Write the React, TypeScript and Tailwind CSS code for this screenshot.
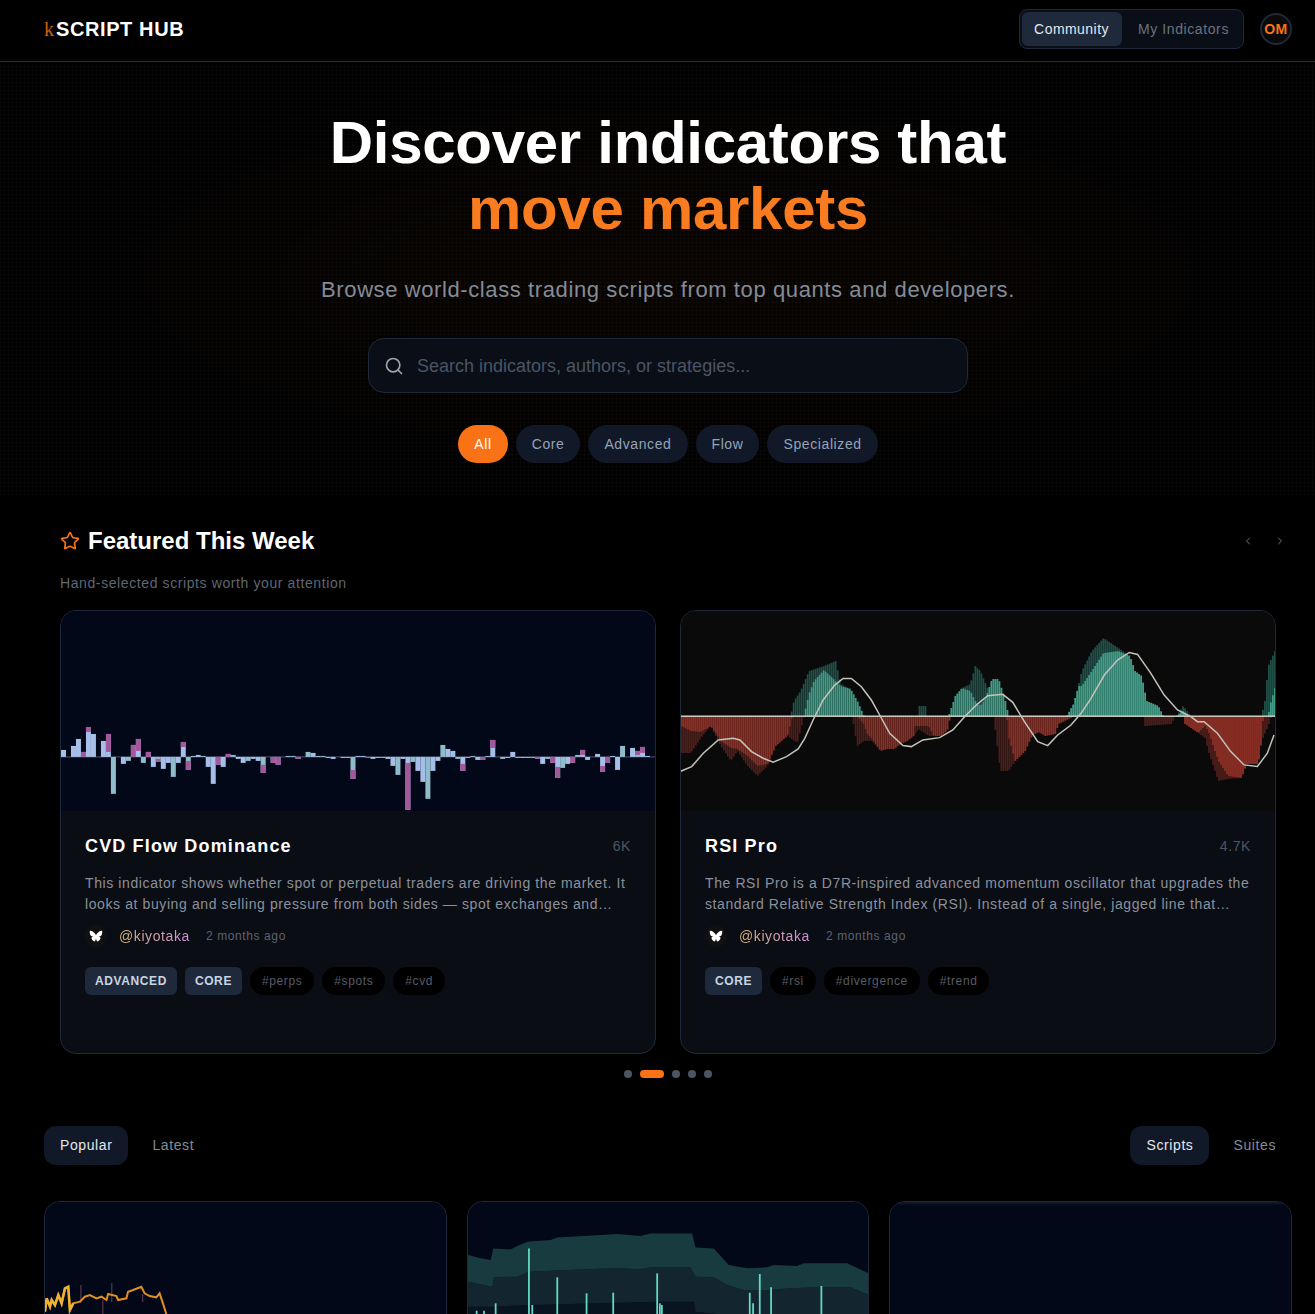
import { ChevronLeft, ChevronRight, Search, Star } from "lucide-react";

type Pt = [number, number];

// CVD bars, left to right: [value, purple part at the tip]
const CVD_BARS: Pt[] = [
  [7, 0], [0, 0], [11, 0], [18, 0], [5, 5], [30, 5], [23, 0], [0, 0], [16, 0], [23, 18], [-37, 0], [0, 0], [-7, 0], [-4, 0], [12, 12], [18, 12],
  [-6, 0], [5, 5], [-10, 0], [-5, 3], [-12, 0], [-6, 0], [-20, 0], [-6, 0], [15, 5], [-13, 9], [1, 0], [2, 0], [1, 0], [-10, 0], [-27, 0], [-8, 8],
  [-10, 0], [3, 3], [2, 0], [-2, 0], [-6, 0], [-4, 0], [-2, 0], [-4, 0], [-16, 8], [0, 0], [-6, 6], [-8, 8], [0, 0], [1, 0], [1, 0], [-2, 2],
  [0, 0], [5, 0], [4, 0], [1, 0], [1, 0], [-1, 0], [-2, 0], [0, 0], [-1, 0], [-1, 0], [-22, 9], [1, 0],
  [1, 0], [-1, 1], [-2, 0], [-1, 0], [-1, 0], [-2, 0], [-9, 0], [-18, 0], [-2, 0], [-53, 47], [-5, 0], [-14, 0], [-25, 0], [-42, 0], [-14, 0], [-4, 0],
  [12, 0], [8, 0], [6, 0], [-2, 0], [-14, 7], [-1, 0], [1, 0], [-3, 0], [-3, 3], [1, 0], [17, 8], [0, 0], [-2, 0], [-1, 0], [5, 0], [-1, 0],
  [-1, 0], [-1, 0], [-1, 0], [-2, 2], [-7, 0], [-2, 0], [-6, 6], [-21, 11], [-11, 0], [-7, 0], [-6, 6], [2, 0], [7, 5], [-3, 0], [0, 0], [3, 0],
  [-15, 6], [-6, 6], [1, 0], [-13, 0], [11, 0], [0, 0], [9, 0], [6, 4], [10, 6], [1, 0],
];

const z7 = (p: Pt[]): Pt[] => p.map(([x, v]) => [x / 3 - 1, v]);
const z8 = (p: Pt[]): Pt[] => p.map(([x, v]) => [294 + x / 3, v]);

const POS_OUTER = [
  ...z7([[330, 0], [340, 15], [360, 25], [385, 45], [430, 50], [465, 55], [480, 32], [510, 27], [530, 15], [550, 0], [712, 0], [716, 10], [735, 10], [738, 0], [805, 0], [825, 20], [845, 28], [870, 32], [885, 50]]),
  ...z8([[15, 45], [40, 25], [50, 37], [70, 37], [90, 15], [100, 0], [275, 0], [295, 12], [310, 30], [320, 45], [350, 65], [385, 78], [430, 68], [465, 60], [480, 45], [500, 40], [515, 15], [550, 10], [565, 0], [605, 0], [625, 10], [640, 3], [650, 0], [860, 0], [870, 15], [880, 50], [900, 65]]),
];
const POS_INNER = [
  ...z7([[370, 0], [385, 22], [400, 35], [430, 46], [465, 35], [480, 30], [510, 27], [530, 15], [550, 0], [805, 0], [825, 20], [845, 28], [870, 25], [885, 15]]),
  ...z8([[15, 10], [30, 17], [50, 37], [70, 37], [90, 15], [100, 0], [275, 0], [295, 12], [310, 30], [320, 30], [350, 45], [385, 63], [430, 65], [465, 60], [480, 45], [500, 40], [515, 15], [550, 10], [565, 0], [605, 0], [625, 5], [640, 0], [880, 0], [885, 10], [900, 28]]),
];
const NEG_OUTER = [
  ...z7([[0, 37], [30, 37], [60, 22], [90, 10], [120, 30], [150, 45], [170, 35], [200, 50], [230, 60], [260, 50], [285, 30], [320, 20], [350, 27], [370, 0], [515, 0], [530, 30], [550, 25], [575, 25], [600, 35], [620, 33], [640, 33], [660, 28], [680, 25], [700, 20], [715, 13], [745, 20], [780, 20], [800, 15], [810, 0]]),
  ...z8([[55, 0], [75, 55], [100, 55], [120, 45], [150, 35], [170, 20], [190, 16], [210, 20], [240, 18], [250, 8], [280, 3], [300, 0], [505, 0], [510, 10], [590, 8], [600, 0], [625, 0], [630, 8], [670, 17], [690, 22], [700, 35], [730, 65], [760, 63], [800, 62], [815, 48], [850, 48], [860, 25], [880, 10], [890, 0]]),
];
const NEG_INNER = [
  ...z7([[0, 10], [30, 15], [60, 16], [90, 10], [120, 25], [150, 32], [170, 33], [200, 40], [230, 50], [260, 48], [285, 30], [320, 20], [335, 0], [530, 0], [550, 8], [560, 18], [575, 23], [600, 35], [620, 33], [640, 33], [660, 28], [680, 25], [700, 20], [705, 10], [745, 10], [760, 20], [780, 20], [800, 15], [810, 0]]),
  ...z8([[95, 0], [100, 20], [120, 45], [150, 35], [170, 20], [190, 16], [210, 20], [240, 18], [250, 8], [280, 3], [300, 0], [625, 0], [630, 8], [670, 17], [690, 10], [700, 15], [730, 45], [760, 60], [800, 62], [815, 48], [850, 48], [860, 25], [865, 0]]),
];

const RSI_LINE_7: Pt[] = [[0, 440], [35, 425], [70, 385], [115, 345], [160, 340], [180, 345], [215, 380], [250, 400], [280, 412], [320, 395], [355, 372], [375, 340], [400, 285], [430, 225], [465, 180], [490, 160], [515, 160], [545, 185], [575, 225], [600, 270], [630, 325], [670, 362], [695, 365], [730, 345], [780, 338], [820, 315], [860, 270], [885, 245]];
const RSI_LINE_8: Pt[] = [[15, 232], [40, 212], [85, 208], [115, 232], [150, 290], [190, 350], [220, 362], [250, 330], [290, 300], [320, 265], [350, 220], [390, 150], [430, 105], [465, 82], [490, 88], [530, 145], [570, 210], [610, 255], [650, 275], [670, 290], [690, 290], [730, 325], [770, 380], [810, 420], [850, 425], [880, 385], [900, 330]];

const rsiLine = [
  ...RSI_LINE_7.map(([x, y]) => `${x / 3 - 1},${625 + y / 3 - 611}`),
  ...RSI_LINE_8.map(([x, y]) => `${294 + x / 3},${625 + y / 3 - 611}`),
].join(" ");

function at(points: Pt[], x: number) {
  for (let i = 1; i < points.length; i++) {
    const [x0, v0] = points[i - 1];
    const [x1, v1] = points[i];
    if (x >= x0 && x <= x1) return v0 + ((v1 - v0) * (x - x0)) / Math.max(x1 - x0, 0.01);
  }
  return 0;
}

const RSI_XS = Array.from({ length: 298 }, (_, i) => i * 2);

const ORANGE_LINE: Pt[] = [[135, 365], [140, 325], [150, 350], [155, 330], [165, 345], [175, 315], [185, 340], [195, 295], [205, 290], [210, 360], [220, 340], [240, 335], [255, 320], [270, 315], [290, 325], [305, 320], [320, 330], [325, 312], [350, 318], [355, 330], [380, 325], [385, 305], [400, 300], [425, 290], [435, 310], [450, 318], [470, 322], [480, 310], [490, 340], [500, 372]];
const toOrange = (p: Pt[]) => p.map(([x, y]) => `${x / 3 - 45},${y / 3 - 12}`).join(" ");
const orangeLine = toOrange(ORANGE_LINE);
const yellowLine = toOrange(ORANGE_LINE.slice(0, 11));

const BAND_TOP: Pt[] = [[52, 195], [90, 205], [120, 210], [128, 175], [180, 178], [200, 168], [230, 155], [300, 150], [320, 142], [400, 138], [500, 132], [570, 138], [600, 130], [725, 130], [735, 172], [790, 175], [835, 225], [890, 235], [950, 232], [970, 225], [1040, 228], [1060, 220], [1190, 220], [1255, 250]];
const BAND_MID: Pt[] = [[52, 275], [125, 290], [130, 262], [200, 260], [235, 245], [400, 238], [500, 235], [570, 238], [600, 232], [720, 232], [735, 260], [790, 262], [830, 285], [880, 300], [950, 300], [1020, 295], [1100, 292], [1200, 292], [1255, 315]];
const BAND_LOW: Pt[] = [[52, 350], [125, 350], [240, 345], [620, 335], [730, 335], [735, 365], [800, 372], [1255, 372]];
const SPIKES: Pt[] = [[235, 175], [320, 262], [408, 310], [488, 308], [620, 250], [898, 308], [908, 340], [928, 252], [962, 292], [1113, 288], [135, 340], [78, 362], [100, 362], [245, 345], [628, 340], [634, 345]];

const bandX = (x: number) => (x - 52) / 3;
const bandY = (y: number) => (y - 36) / 3;
const bandPath = (top: Pt[], bottom: Pt[]) =>
  [...top, ...[...bottom].reverse()].map(([x, y]) => `${bandX(x)},${bandY(y)}`).join(" ");

function CvdChart() {
  const base = 146;
  return (
    <svg viewBox="0 0 595 200" className="block h-[200px] w-full bg-[#020817] blur-[0.5px]">
      <rect x="0" y={base - 0.5} width="595" height="1" fill="#8d94b8" opacity="0.55" />
      {CVD_BARS.map(([v, tip], i) => {
        const h = Math.abs(v);
        const up = v > 0;
        const y = up ? base - h : base;
        const teal = i % 3 === 1;
        return (
          <g key={i}>
            <rect x={i * 5} y={y} width="5" height={h} fill={teal ? "#8fbccb" : "#a5bfe8"} />
            {tip > 0 && <rect x={i * 5} y={up ? y : base + h - tip} width="5" height={tip} fill="#a4589c" />}
          </g>
        );
      })}
    </svg>
  );
}

function RsiChart() {
  const zero = 105;
  return (
    <svg viewBox="0 0 595 200" className="block h-[200px] w-full bg-[#0a0a0a] blur-[0.5px]">
      {RSI_XS.map((x) => {
        const po = at(POS_OUTER, x);
        const pi = at(POS_INNER, x);
        const no = at(NEG_OUTER, x);
        const ni = at(NEG_INNER, x);
        return (
          <g key={x}>
            <rect x={x} y={zero - po} width="1.8" height={po} fill="#1f4f47" />
            <rect x={x} y={zero - pi} width="1.8" height={pi} fill="#3f9c85" />
            <rect x={x} y={zero} width="1.8" height={no} fill="#4b1e1a" />
            <rect x={x} y={zero} width="1.8" height={ni} fill="#8a2f25" />
          </g>
        );
      })}
      <rect x="0" y={zero - 0.5} width="595" height="1.4" fill="#d8d8cf" />
      <polyline points={rsiLine} fill="none" stroke="#c4c4bb" strokeWidth="1.5" />
    </svg>
  );
}

function OrangeChart() {
  return (
    <svg viewBox="0 0 402 200" className="block h-[200px] w-full bg-[#020817] blur-[0.4px]">
      {[[36, 83, 101], [67, 81, 100], [58, 98, 113], [98, 92, 100]].map(([x, y1, y2]) => (
        <line key={x} x1={x} x2={x} y1={y1} y2={y2} stroke="#5c3350" strokeWidth="1.2" />
      ))}
      <polyline points={orangeLine} fill="none" stroke="#e09020" strokeWidth="2" />
      <polyline points={yellowLine} fill="none" stroke="#f0b030" strokeWidth="2.6" />
    </svg>
  );
}

function BandChart() {
  const bottom: Pt[] = [[52, 640], [1255, 640]];
  return (
    <svg viewBox="0 0 401 200" className="block h-[200px] w-full bg-[#020817] blur-[0.4px]">
      <polygon points={bandPath(BAND_LOW, bottom)} fill="#081420" />
      <polygon points={bandPath(BAND_MID, BAND_LOW)} fill="#13252f" />
      <polygon points={bandPath(BAND_TOP, BAND_MID)} fill="#183b3f" />
      {SPIKES.map(([x, y]) => (
        <line key={x} x1={bandX(x)} x2={bandX(x)} y1={bandY(y)} y2="120" stroke="#62d8c5" strokeWidth="1.8" />
      ))}
    </svg>
  );
}

function Butterfly() {
  return (
    <svg viewBox="0 0 24 24" className="h-[14px] w-[14px]" fill="#ffffff">
      <path d="M12 10.5C10.8 7.6 6.6 3.6 3.2 3.1 1.6 2.9 1 4 1.2 5.6c.3 2.4 1 5.4 2.8 6.6 1.1.7 2.4.8 3.6.7-1.8.4-3.6 1.3-3.3 3 .4 2.2 3 5.3 5 5.4 1.4.1 2.2-2.4 2.7-5 .5 2.6 1.3 5.1 2.7 5 2-.1 4.6-3.2 5-5.4.3-1.7-1.5-2.6-3.3-3 1.2.1 2.5 0 3.6-.7 1.8-1.2 2.5-4.2 2.8-6.6.2-1.6-.4-2.7-2-2.5-3.4.5-7.6 4.5-8.8 7.4z" />
    </svg>
  );
}

const FEATURED = [
  {
    title: "CVD Flow Dominance",
    views: "6K",
    text: "This indicator shows whether spot or perpetual traders are driving the market. It looks at buying and selling pressure from both sides — spot exchanges and perpetual futures venues, side by side in one pane.",
    levels: ["ADVANCED", "CORE"],
    tags: ["#perps", "#spots", "#cvd"],
    chart: <CvdChart />,
  },
  {
    title: "RSI Pro",
    views: "4.7K",
    text: "The RSI Pro is a D7R-inspired advanced momentum oscillator that upgrades the standard Relative Strength Index (RSI). Instead of a single, jagged line that whips around, it plots a smooth band of momentum.",
    levels: ["CORE"],
    tags: ["#rsi", "#divergence", "#trend"],
    chart: <RsiChart />,
  },
];

const FILTERS = ["All", "Core", "Advanced", "Flow", "Specialized"];

export default function App() {
  return (
    <div className="h-[1314px] overflow-hidden bg-black">
      {/* the page runs a bit wider than the window, its right side is clipped */}
      <div className="w-[1336px] font-['Liberation_Sans',sans-serif] tracking-[0.6px] text-white">
        {/* Header */}
        <header className="flex h-[62px] items-center justify-between border-b border-[#262a33] px-[44px] pb-[3px]">
          <div className="flex items-baseline text-[20px] font-bold tracking-[0.6px]">
            <span className="font-['Liberation_Serif',serif] font-normal tracking-[2px] text-[#c8620c]">k</span>
            <span>SCRIPT HUB</span>
          </div>
          <div className="flex items-center gap-4">
            <div className="flex h-10 items-center rounded-lg border border-[#1e293b] bg-[#0a0e17] p-0.5 text-sm">
              <div className="flex h-[34px] items-center rounded-md bg-[#1e293b] pr-[13px] pl-3 tracking-[0.45px] text-[#e2e8f0]">Community</div>
              <div className="flex h-[34px] items-center rounded-md pr-3 pl-4 text-[#6b7280]">My Indicators</div>
            </div>
            <div className="flex h-8 w-8 items-center justify-center rounded-full border-2 border-[#1f2937] bg-[#0a0a0a] text-sm font-bold tracking-[0.45px] text-[#f97316]">
              OM
            </div>
          </div>
        </header>

        {/* Hero */}
        <section className="flex h-[433px] flex-col items-center bg-[radial-gradient(ellipse_at_center,rgba(249,115,22,0.035),transparent_70%),linear-gradient(rgba(255,255,255,0.018)_1px,transparent_1px),linear-gradient(90deg,rgba(255,255,255,0.018)_1px,transparent_1px)] bg-[size:100%_100%,4px_4px,4px_4px] pt-[48px]">
          <h1 className="text-center text-6xl leading-[66px] font-bold tracking-[-0.3px]">
            Discover indicators that
            <br />
            <span className="text-[#f97c20]">move markets</span>
          </h1>
          <p className="mt-[34px] text-[22px] leading-7 text-[#858b97]">
            Browse world-class trading scripts from top quants and developers.
          </p>
          <div className="mt-[34px] flex h-[55px] w-[600px] items-center gap-[13px] rounded-2xl border border-[#1e293b] bg-[#0a0e17] px-[15px]">
            <Search size={20} className="text-[#9ca3af]" />
            <span className="text-lg tracking-normal text-[#4b5563]">Search indicators, authors, or strategies...</span>
          </div>
          <div className="mt-[32px] flex gap-2 text-sm">
            {FILTERS.map((f, i) => (
              <div
                key={f}
                className={
                  i === 0
                    ? "flex h-[38px] items-center rounded-full bg-[#f97316] px-4 text-white"
                    : "flex h-[38px] items-center rounded-full bg-[#111827] px-4 text-[#94a3b8]"
                }
              >
                {f}
              </div>
            ))}
          </div>
        </section>

        {/* Featured */}
        <section className="px-[60px] pt-[30px]">
          <div className="flex items-center justify-between">
            <div className="flex items-center gap-2">
              <Star size={20} className="text-[#f97316]" />
              <h2 className="text-2xl leading-8 font-bold tracking-normal">Featured This Week</h2>
            </div>
            <div className="mr-[-10px] flex items-center gap-[20px] text-[#6b7280]">
              <ChevronLeft size={12} />
              <ChevronRight size={12} />
            </div>
          </div>
          <p className="mt-[16px] text-sm leading-5 text-[#5f6672]">Hand-selected scripts worth your attention</p>
          <div className="mt-[17px] grid grid-cols-2 gap-6">
            {FEATURED.map((card) => (
              <article key={card.title} className="h-[444px] overflow-hidden rounded-2xl border border-[#1e293b] bg-[#0a0d14]">
                {card.chart}
                <div className="px-6 pt-[21px]">
                  <div className="flex items-center justify-between">
                    <h3 className="text-lg leading-7 font-bold tracking-[1.15px] text-white">{card.title}</h3>
                    <span className="text-sm text-[#4f5662]">{card.views}</span>
                  </div>
                  <p className="mt-[13px] line-clamp-2 text-sm leading-[21px] text-[#8b919c]">{card.text}</p>
                  <div className="mt-[9px] flex h-6 items-center">
                    <div className="flex h-[22px] w-[22px] items-center justify-center rounded-full bg-[#111111]">
                      <Butterfly />
                    </div>
                    <span className="ml-[12px] bg-linear-to-r from-[#dcb877] to-[#cf8ddb] bg-clip-text text-sm text-transparent">@kiyotaka</span>
                    <span className="ml-4 text-xs text-[#5d6370]">2 months ago</span>
                  </div>
                  <div className="mt-[19px] flex gap-2 text-xs">
                    {card.levels.map((l) => (
                      <span key={l} className="flex h-7 items-center rounded-md bg-[#1e293b] px-2.5 font-bold text-[#cbd5e1]">
                        {l}
                      </span>
                    ))}
                    {card.tags.map((t) => (
                      <span key={t} className="flex h-7 items-center rounded-full bg-black px-3 text-[#565c68]">
                        {t}
                      </span>
                    ))}
                  </div>
                </div>
              </article>
            ))}
          </div>
          <div className="mt-4 flex justify-center gap-2">
            <span className="h-2 w-2 rounded-full bg-[#4b5563]" />
            <span className="h-2 w-6 rounded-full bg-[#f97316]" />
            <span className="h-2 w-2 rounded-full bg-[#4b5563]" />
            <span className="h-2 w-2 rounded-full bg-[#4b5563]" />
            <span className="h-2 w-2 rounded-full bg-[#4b5563]" />
          </div>
        </section>

        {/* Browse tabs */}
        <section className="px-[44px] pt-[48px]">
          <div className="flex items-center justify-between text-sm">
            <div className="flex items-center gap-2">
              <div className="flex h-[39px] items-center rounded-xl bg-[#111827] px-4 pb-px text-[#e2e8f0]">Popular</div>
              <div className="flex h-[39px] items-center px-4 pb-px text-[#858b97]">Latest</div>
            </div>
            <div className="flex items-center gap-2">
              <div className="flex h-[39px] items-center rounded-xl bg-[#111827] px-4 pb-px text-[#e2e8f0]">Scripts</div>
              <div className="flex h-[39px] items-center px-4 pb-px text-[#858b97]">Suites</div>
            </div>
          </div>
          <div className="mt-[36px] grid grid-cols-3 gap-5">
            <article className="overflow-hidden rounded-2xl border border-[#1e293b] bg-[#0a0d14]">
              <OrangeChart />
            </article>
            <article className="overflow-hidden rounded-2xl border border-[#1e293b] bg-[#0a0d14]">
              <BandChart />
            </article>
            <article className="overflow-hidden rounded-2xl border border-[#1e293b] bg-[#0a0d14]">
              <div className="h-[200px] bg-linear-to-b from-[#151c2a] to-[#020817] to-[2%]" />
            </article>
          </div>
        </section>
      </div>
    </div>
  );
}
